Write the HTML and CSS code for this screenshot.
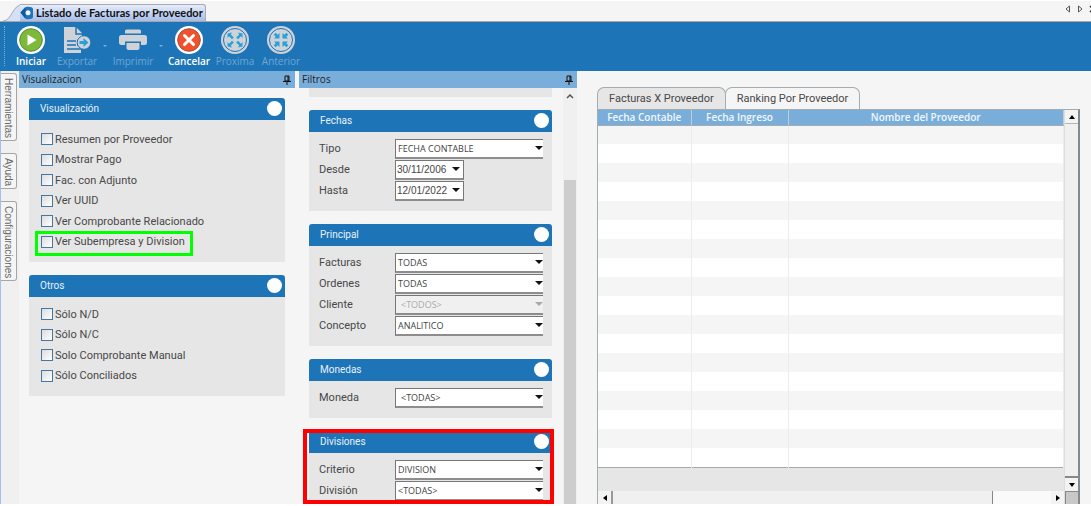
FILE: index.html
```html
<!DOCTYPE html>
<html lang="es">
<head>
<meta charset="utf-8">
<title>Listado de Facturas por Proveedor</title>
<link rel="stylesheet" href="styles.css">
</head>
<body>
<div class="app">
  <header class="doc-tabs">
    <svg class="tab-slope" width="20" height="17" viewBox="0 0 20 17"><path d="M0 17C9 17 9 0 20 0V17Z" fill="#d4e0f7"/><path d="M0 17C9 17 9 .5 20 .5" fill="none" stroke="#a9abb0"/></svg>
    <button class="doc-tab" type="button">
      <svg width="14" height="14" viewBox="0 0 14 14"><path d="M.5 6.500 5 1.500Q6 .5 8 .8l3.500.5q1.500.3 1.500 2v7.400q0 1.700-1.500 2L8 13.200q-2 .3-3-1Z" fill="#1d75b7"/><path d="M.5 6.500 5 1.500l1.500 5-1.500 5.700Z" fill="#135b98"/><circle cx="8" cy="6.800" r="2.500" fill="#eaf5ff"/></svg>
      <span>Listado de Facturas por Proveedor</span>
    </button>
    <nav class="doc-nav">
      <button type="button" aria-label="Anterior"><svg width="6" height="8" viewBox="0 0 6 8"><path d="M4.500 1v6L1 4Z" fill="none" stroke="#555"/></svg></button>
      <button type="button" aria-label="Siguiente"><svg width="6" height="8" viewBox="0 0 6 8"><path d="M1.500 1v6L5 4Z" fill="none" stroke="#555"/></svg></button>
      <button type="button" aria-label="Cerrar"><svg width="6" height="8" viewBox="0 0 6 8"><path d="M1 1l6 6M7 1 1 7" stroke="#333" stroke-width="1.500"/></svg></button>
    </nav>
  </header>

  <div class="toolbar">
    <span class="grip"></span>
    <button class="tool" type="button">
      <svg width="28" height="28" viewBox="0 0 28 28"><circle cx="14" cy="14" r="14" fill="#fff"/><circle cx="14" cy="14" r="11.300" fill="#7dba3c" stroke="#578d35"/><path d="M10.500 8.500v11l9-5.500Z" fill="#fff"/></svg>
      <span>Iniciar</span>
    </button>
    <button class="tool" type="button" disabled>
      <svg width="28" height="28" viewBox="0 0 28 28"><path d="M1 1h12l6 6v4q-5 1-5 5.500T18 22v5H1Z" fill="#cfd3d8"/><path d="M13 0v8h7" fill="none" stroke="#1d75b7" stroke-width="1.500"/><path d="M4 15h9M4 19h9M4 23h14" stroke="#1d75b7" stroke-width="1.500"/><circle cx="21" cy="16.500" r="6.800" fill="#cfd3d8" stroke="#1d75b7"/><path d="M16.500 15h4v-3l5 4.500-5 4.500v-3h-4Z" fill="#28a0dc"/></svg>
      <span>Exportar</span>
    </button>
    <button class="tool-more" type="button" aria-label="Opciones de exportar" disabled></button>
    <button class="tool" type="button" disabled>
      <svg width="28" height="28" viewBox="0 0 28 28"><path d="M6 5q0-1.500 1.500-1.500h13Q22 3.500 22 5v2.500H6Z" fill="#cfd3d8"/><path d="M2.500 9h23Q28 9 28 11.500v5q0 2.500-2.500 2.500H22v-3.500H6V19H2.500Q0 19 0 16.500v-5Q0 9 2.500 9Z" fill="#cfd3d8"/><path d="M7.500 17h13v5q0 2-2 2h-9q-2 0-2-2Z" fill="#cfd3d8"/></svg>
      <span>Imprimir</span>
    </button>
    <button class="tool-more" type="button" aria-label="Opciones de imprimir" disabled></button>
    <button class="tool" type="button">
      <svg width="28" height="28" viewBox="0 0 28 28"><circle cx="14" cy="14" r="14" fill="#fff"/><circle cx="14" cy="14" r="11.300" fill="#f0522e" stroke="#a1503e"/><path d="m9.500 9.500 9 9m0-9-9 9" stroke="#fff" stroke-width="3" stroke-linecap="round"/></svg>
      <span>Cancelar</span>
    </button>
    <button class="tool" type="button" disabled>
      <svg width="28" height="28" viewBox="0 0 28 28"><circle cx="14" cy="14" r="14" fill="#cfd3d8"/><circle cx="14" cy="14" r="11.500" fill="none" stroke="#1d75b7"/><path d="M6.500 12V7.500L11 6.500 9.800 8.500l3 3-1.800 1.800-3-3ZM21.500 12V7.500L17 6.500l1.200 2-3 3 1.800 1.800 3-3ZM6.500 16v4.500l4.500 1-1.200-2 3-3-1.800-1.800-3 3ZM21.500 16v4.500l-4.500 1 1.200-2-3-3 1.800-1.800 3 3Z" fill="#28a0dc"/></svg>
      <span>Proxima</span>
    </button>
    <button class="tool" type="button" disabled>
      <svg width="28" height="28" viewBox="0 0 28 28"><circle cx="14" cy="14" r="14" fill="#cfd3d8"/><circle cx="14" cy="14" r="11.500" fill="none" stroke="#1d75b7"/><path d="M12.500 7v5.500H7l1.700-1.700-2-2 2-2 2 2ZM15.500 7v5.500H21l-1.700-1.700 2-2-2-2-2 2ZM12.500 21v-5.500H7l1.700 1.700-2 2 2 2 2-2ZM15.500 21v-5.500H21l-1.700 1.700 2 2-2 2-2-2Z" fill="#28a0dc"/></svg>
      <span>Anterior</span>
    </button>
  </div>

  <div class="workspace">
    <nav class="side-tabs">
      <button type="button">Herramientas</button>
      <button type="button">Ayuda</button>
      <button type="button">Configuraciones</button>
    </nav>

    <section class="panel panel-view">
      <h2 class="panel-title">Visualizacion <svg width="8" height="10" viewBox="0 0 8 10"><path d="M2 1h4v5H2ZM5 1v5M0 6.500h8M4 7v3" fill="none" stroke="#111"/></svg></h2>
      <div class="panel-body">
        <section class="card">
          <h3 class="card-title">Visualización <button class="knob" type="button" aria-label="Contraer Visualización"></button></h3>
          <div class="card-body checks roomy">
            <label><input type="checkbox">Resumen por Proveedor</label>
            <label><input type="checkbox">Mostrar Pago</label>
            <label><input type="checkbox">Fac. con Adjunto</label>
            <label><input type="checkbox">Ver UUID</label>
            <label><input type="checkbox">Ver Comprobante Relacionado</label>
            <label class="marked"><input type="checkbox">Ver Subempresa y Division</label>
          </div>
        </section>
        <section class="card">
          <h3 class="card-title">Otros <button class="knob" type="button" aria-label="Contraer Otros"></button></h3>
          <div class="card-body checks">
            <label><input type="checkbox">Sólo N/D</label>
            <label><input type="checkbox">Sólo N/C</label>
            <label><input type="checkbox">Solo Comprobante Manual</label>
            <label><input type="checkbox">Sólo Conciliados</label>
          </div>
        </section>
      </div>
    </section>

    <section class="panel panel-filters">
      <h2 class="panel-title">Filtros <svg width="8" height="10" viewBox="0 0 8 10"><path d="M2 1h4v5H2ZM5 1v5M0 6.500h8M4 7v3" fill="none" stroke="#111"/></svg></h2>
      <div class="filter-scroll">
        <div class="filter-list">
          <div class="card-tail"></div>
          <section class="card">
            <h3 class="card-title">Fechas <button class="knob" type="button" aria-label="Contraer Fechas"></button></h3>
            <div class="card-body fields">
              <label for="tipo">Tipo</label><span class="combo"><select id="tipo"><option>FECHA CONTABLE</option></select></span>
              <label for="desde">Desde</label><span class="combo date"><input id="desde" type="text" value="30/11/2006"></span>
              <label for="hasta">Hasta</label><span class="combo date"><input id="hasta" type="text" value="12/01/2022"></span>
            </div>
          </section>
          <section class="card">
            <h3 class="card-title">Principal <button class="knob" type="button" aria-label="Contraer Principal"></button></h3>
            <div class="card-body fields">
              <label for="facturas">Facturas</label><span class="combo"><select id="facturas"><option>TODAS</option></select></span>
              <label for="ordenes">Ordenes</label><span class="combo"><select id="ordenes"><option>TODAS</option></select></span>
              <label for="cliente">Cliente</label><span class="combo off inset"><select id="cliente" disabled><option>&lt;TODOS&gt;</option></select></span>
              <label for="concepto">Concepto</label><span class="combo"><select id="concepto"><option>ANALITICO</option></select></span>
            </div>
          </section>
          <section class="card">
            <h3 class="card-title">Monedas <button class="knob" type="button" aria-label="Contraer Monedas"></button></h3>
            <div class="card-body fields">
              <label for="moneda">Moneda</label><span class="combo inset"><select id="moneda"><option>&lt;TODAS&gt;</option></select></span>
            </div>
          </section>
          <section class="card highlighted">
            <h3 class="card-title">Divisiones <button class="knob" type="button" aria-label="Contraer Divisiones"></button></h3>
            <div class="card-body fields">
              <label for="criterio">Criterio</label><span class="combo"><select id="criterio"><option>DIVISION</option></select></span>
              <label for="division">División</label><span class="combo"><select id="division"><option>&lt;TODAS&gt;</option></select></span>
            </div>
          </section>
        </div>
        <div class="vbar">
          <svg width="8" height="6" viewBox="0 0 8 6"><path d="M1 5l3-3 3 3" fill="none" stroke="#555" stroke-width="1.500"/></svg>
          <span class="vbar-thumb"></span>
        </div>
      </div>
    </section>

    <main class="results">
      <div class="result-tabs">
        <button class="active" type="button">Facturas X Proveedor</button>
        <button type="button">Ranking Por Proveedor</button>
      </div>
      <div class="grid-frame">
        <div class="grid-main">
          <table class="grid">
            <colgroup><col class="col-date"><col class="col-entry"><col></colgroup>
            <thead><tr><th>Fecha Contable</th><th>Fecha Ingreso</th><th>Nombre del Proveedor</th></tr></thead>
            <tbody>
              <tr><td></td><td></td><td></td></tr><tr><td></td><td></td><td></td></tr>
              <tr><td></td><td></td><td></td></tr><tr><td></td><td></td><td></td></tr>
              <tr><td></td><td></td><td></td></tr><tr><td></td><td></td><td></td></tr>
              <tr><td></td><td></td><td></td></tr><tr><td></td><td></td><td></td></tr>
              <tr><td></td><td></td><td></td></tr><tr><td></td><td></td><td></td></tr>
              <tr><td></td><td></td><td></td></tr><tr><td></td><td></td><td></td></tr>
              <tr><td></td><td></td><td></td></tr><tr><td></td><td></td><td></td></tr>
              <tr><td></td><td></td><td></td></tr><tr><td></td><td></td><td></td></tr>
              <tr><td></td><td></td><td></td></tr><tr><td></td><td></td><td></td></tr>
            </tbody>
          </table>
          <div class="hbar">
            <button type="button" aria-label="Desplazar a la izquierda"><svg width="4" height="6" viewBox="0 0 4 6"><path d="M4 0v6L0 3Z"/></svg></button>
            <span class="hbar-thumb"></span>
            <span class="hbar-track"></span>
            <button type="button" aria-label="Desplazar a la derecha"><svg width="4" height="6" viewBox="0 0 4 6"><path d="M0 0v6l4-3Z"/></svg></button>
          </div>
        </div>
        <div class="grid-vbar">
          <button type="button" aria-label="Desplazar arriba"><svg width="6" height="4" viewBox="0 0 6 4"><path d="M0 4h6L3 0Z"/></svg></button>
          <span class="grid-thumb"></span>
          <button type="button" aria-label="Desplazar abajo"><svg width="6" height="4" viewBox="0 0 6 4"><path d="M0 0h6L3 4Z"/></svg></button>
          <span class="corner"></span>
        </div>
      </div>
    </main>
  </div>
</div>
</body>
</html>
```

FILE: styles.css
```css
* { box-sizing: border-box; }
body { margin: 0; background: #fff; color: #484848; font: 11px Roboto, "Open Sans", sans-serif; }
button, input, select { font: inherit; color: inherit; margin: 0; }
button { padding: 0; border: 0; background: none; }
h2, h3 { margin: 0; font-weight: 400; }
svg { display: block; flex: none; }

.app { display: flex; flex-direction: column; height: calc(100vh - 2px); overflow: hidden; background: #f5f5f5; }

.doc-tabs { display: flex; align-items: flex-end; flex: none; height: 22px; padding-left: 3px; border-top: 1px solid #fff; border-bottom: 1px solid #aaa69d; }
.doc-tab { display: flex; align-items: center; gap: 2px; height: 17px; padding-right: 2px; border-top: 1px solid #a9abb0; border-right: 1px solid #a9abb0; border-radius: 0 3px 0 0; background: linear-gradient(#e6ecfa, #a5bdeb); color: #111; font: 700 11px/16px Lato, sans-serif; }
.tab-slope { margin-right: -3px; }
.doc-nav { display: flex; gap: 6px; margin: 0 -4px 8px auto; }

.toolbar { display: flex; align-items: flex-start; flex: none; height: 49px; padding: 4px 0 0 4px; background: #1d75b7; }
.grip { width: 4px; height: 40px; border-left: 1px dotted #7fb0d8; }
.tool { display: flex; flex-direction: column; align-items: center; width: 46px; color: #fff; font: 600 10px/14px "Open Sans", sans-serif; }
.tool:disabled { color: #6fa6d2; font-weight: 400; }
.tool-more { display: flex; justify-content: center; width: 10px; padding-top: 19px; }
.tool-more::after { content: ""; border: 2px solid transparent; border-top-color: #7fb0d8; }

.workspace { display: flex; flex: 1; min-height: 0; border-left: 1px solid #a5bdeb; }

.side-tabs { display: flex; flex-direction: column; align-items: flex-start; gap: 12px; width: 18px; padding-top: 2px; background: #f0f0f0; }
.side-tabs button { width: 16px; padding: 4px 0 2px; border: 1px solid #a6a6a6; border-left: 0; border-radius: 0 3px 3px 0; background: #f5f5f5; color: #666; font: 10px/15px "Liberation Sans", sans-serif; writing-mode: vertical-rl; text-align: left; }

.panel { display: flex; flex-direction: column; flex: none; min-height: 0; }
.panel-view { width: 276px; margin-right: 4px; }
.panel-filters { width: 278px; }
.panel-title { display: flex; justify-content: space-between; align-items: center; flex: none; height: 17px; padding: 0 4px 0 3px; background: #79aedb; color: #222; font: 10px/17px "Open Sans", sans-serif; }
.panel-body { display: flex; flex-direction: column; gap: 13px; padding: 10px; }

.card { position: relative; flex: none; }
.card-title { display: flex; justify-content: space-between; align-items: center; height: 22px; padding: 0 3px 0 11px; border-radius: 3px 3px 0 0; background: #1d75b7; color: #e8f1f9; font-size: 10px; line-height: 22px; }
.knob { width: 15px; height: 15px; margin-bottom: 2px; border-radius: 50%; background: #fff; }
.card-body { display: grid; grid-auto-rows: 1fr; background: #e6e6e6; }
.checks { min-height: 99px; padding: 7px 12px 10px; }
.checks.roomy { min-height: 142px; padding-top: 9px; }
.checks label { display: flex; align-items: center; gap: 2px; position: relative; justify-self: start; }
.checks input { appearance: none; width: 12px; height: 12px; border: 1px solid #4577a4; background: linear-gradient(135deg, #dcdcdc, #fff); }
.marked::after { content: ""; position: absolute; inset: -1px -8px -4px -6px; border: 3px solid #0f0; }

.filter-scroll { display: flex; flex: 1; min-height: 0; overflow: hidden; }
.filter-list { display: flex; flex-direction: column; flex: 1; gap: 13px; padding: 0 11px 0 10px; }
.card-tail { flex: none; height: 9px; background: #e6e6e6; }
.fields { grid-template-columns: 76px 1fr; row-gap: 1px; padding: 7px 9px 10px 10px; line-height: 16px; align-items: center; }
.combo { position: relative; display: flex; height: 20px; border: 1px solid #777; border-right: 0; border-bottom-width: 2px; border-bottom-color: #8d8d8d; background: #fff; }
.combo select, .combo input { appearance: none; width: 100%; min-width: 0; padding: 0 12px 0 2px; border: 0; border-radius: 0; background: none; font: 9px "Open Sans", sans-serif; color: #444; opacity: 1; }
.combo.inset select { padding-left: 5px; }
.combo::after { content: ""; position: absolute; right: 0; top: 6px; border: 4px solid transparent; border-top-color: #111; border-bottom: 0; }
.combo.date { justify-self: start; width: 69px; border-right: 1px solid #777; }
.combo.date input { padding: 0 0 0 1px; font: 10px "Liberation Sans", sans-serif; }
.combo.date::after { right: 3px; }
.combo.off { background: #f0f0f0; }
.combo.off select { color: #aaa; }
.combo.off::after { border-top-color: #aaa; }
.highlighted .fields { padding-bottom: 3px; }
.highlighted::after { content: ""; position: absolute; inset: -2px -2px 0 -6px; border: 4px solid #f00; pointer-events: none; }

.vbar { display: flex; flex-direction: column; align-items: center; width: 14px; padding-top: 5px; background: #f0f0f0; }
.vbar-thumb { flex: 1; width: 12px; margin-top: 81px; background: #cdcdcd; }

.results { display: flex; flex-direction: column; flex: 1; min-width: 0; padding: 16px 11px 0 20px; }
.result-tabs { display: flex; flex: none; height: 22px; }
.result-tabs button { padding: 0 11px; border: 1px solid #a3acb0; border-bottom: 0; border-radius: 7px 7px 0 0; }
.result-tabs .active { background: #e6e6e6; }
.result-tabs button + button { margin-left: -1px; }
.grid-frame { display: flex; flex: 1; min-height: 0; border: 1px solid #a3acb0; border-right: 2px solid #83898c; border-bottom: 0; background: #e6e6e6; }
.grid-main { display: flex; flex-direction: column; justify-content: space-between; flex: 1; min-width: 0; }
.grid { width: 100%; table-layout: fixed; border-collapse: collapse; border-bottom: 1px solid #a8a8a8; }
.col-date { width: 93px; }
.col-entry { width: 97px; }
.grid th { height: 15px; padding: 0; border-right: 1px solid #c5cbd0; border-bottom: 1px solid #a3acb0; background: #79aedb; color: #f2f7fb; font: 600 10px/14px "Open Sans", sans-serif; }
.grid td { height: 19px; padding: 0; border-right: 1px solid #ececec; }
.grid tbody tr { background: #fff; }
.grid tbody tr:nth-child(odd) { background: #f5f5f5; }
.hbar { display: flex; height: 13px; background: #f5f5f5; }
.hbar button, .grid-vbar button { display: flex; align-items: center; justify-content: center; flex: none; width: 13px; height: 13px; background: #f3f3f3; }
.hbar-thumb { flex: 382; border-left: 2px solid #999; border-right: 1px solid #888; background: #f0f0f0; }
.hbar-track { flex: 58; background: #fafafa; }
.grid-vbar { display: flex; flex-direction: column; width: 14px; border-left: 1px solid #ddd; background: #f0f0f0; }
.grid-thumb { flex: 1; border-top: 1px solid #b5b5b5; border-bottom: 2px solid #888; }
.corner { height: 13px; border-top: 1px solid #888; border-left: 1px solid #888; background: #c8c8c8; }
```
